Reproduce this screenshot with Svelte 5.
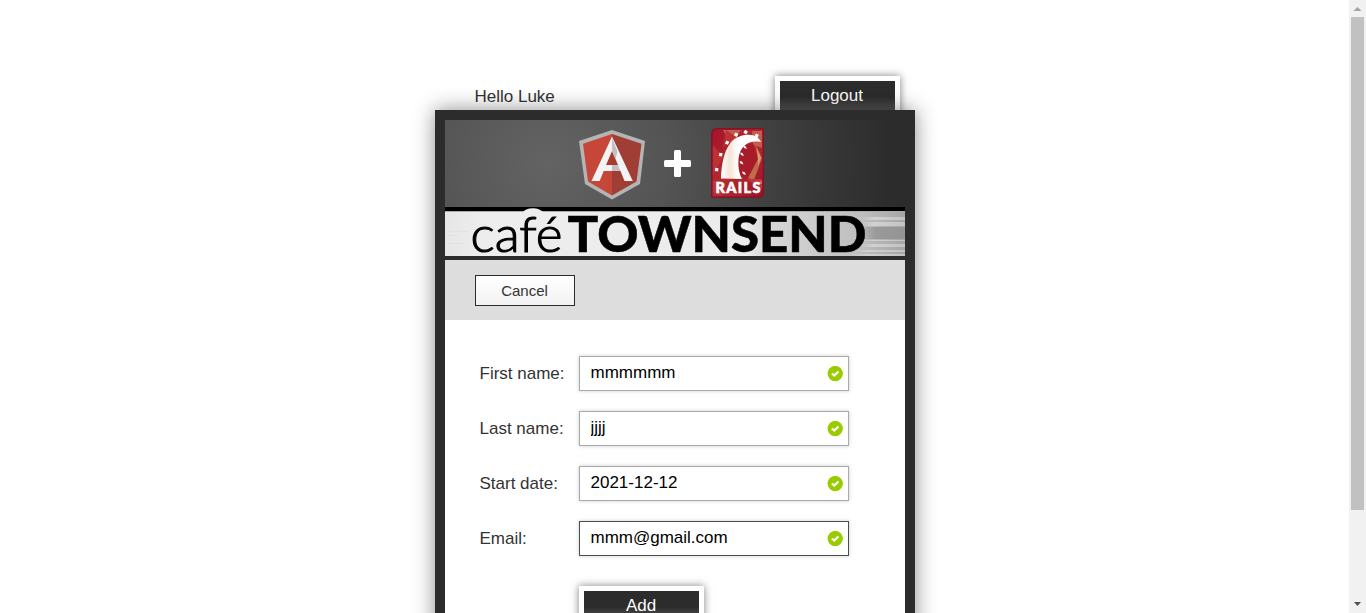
<script>
  let fields = $state([
    { label: 'First name:', value: 'mmmmmm', active: false },
    { label: 'Last name:', value: 'jjjj', active: false },
    { label: 'Start date:', value: '2021-12-12', active: false },
    { label: 'Email:', value: 'mmm@gmail.com', active: true }
  ]);

  // x, y and rotation of the ties along the outside of the rail arch
  const outerTies = [[4, 40, 6], [8, 25, 10], [14.5, 13, 25], [23.5, 5, 30], [33, 2.5, 35], [44, 6, 30]];
  const innerTies = [[31, 43.5], [28.5, 33], [29, 24.5], [32, 17.5]];
</script>

<div class="window">
  <div class="page">
    <div class="column">
      <div class="top">
        <span class="hello">Hello Luke</span>
        <button class="dark">Logout</button>
      </div>
      <main class="card">
        <svg class="banner" width="460" height="140" viewBox="0 0 460 140">
          <defs>
            <radialGradient id="glow" gradientUnits="userSpaceOnUse" cx="102" cy="42" r="345">
              <stop offset="0" stop-color="#636363" />
              <stop offset="0.35" stop-color="#545454" />
              <stop offset="0.7" stop-color="#3d3d3d" />
              <stop offset="1" stop-color="#2c2c2c" />
            </radialGradient>
            <linearGradient id="band">
              <stop offset="0" stop-color="#e6e6e6" />
              <stop offset="0.08" stop-color="#ededed" />
              <stop offset="0.65" stop-color="#ececec" />
              <stop offset="0.7" stop-color="#d8d8d8" />
              <stop offset="0.84" stop-color="#c6c6c6" />
              <stop offset="0.91" stop-color="#bebebe" />
              <stop offset="1" stop-color="#a5a5a5" />
            </linearGradient>
            <linearGradient id="streak">
              <stop offset="0" stop-color="#ccc" stop-opacity="0" />
              <stop offset="0.35" stop-color="#d2d2d2" />
              <stop offset="1" stop-color="#c2c2c2" />
            </linearGradient>
            <linearGradient id="shade">
              <stop offset="0" stop-color="#8d8d8d" stop-opacity="0" />
              <stop offset="0.4" stop-color="#8d8d8d" stop-opacity=".7" />
              <stop offset="1" stop-color="#8d8d8d" stop-opacity=".7" />
            </linearGradient>
            <linearGradient id="ruby" x2="1" y2="1">
              <stop offset="0" stop-color="#a31329" />
              <stop offset="0.5" stop-color="#b52b30" />
              <stop offset="1" stop-color="#9b1127" />
            </linearGradient>
            <linearGradient id="arch" x2="1">
              <stop offset="0" stop-color="#fff" />
              <stop offset="0.22" stop-color="#f4e4d8" />
              <stop offset="0.42" stop-color="#fff" />
            </linearGradient>
          </defs>

          <rect width="460" height="140" fill="#2c2c2c" />
          <rect width="460" height="87" fill="url(#glow)" />

          <path d="M167 10 L200 21 L195 64 L167 79.500 L140 64 L134 21 Z" fill="#b3b5b5" />
          <path d="M167 14 L138 23.700 L143 61.500 L167 75.500 Z" fill="#c64638" />
          <path d="M167 14 L196.500 23.700 L191.500 61.500 L167 75.500 Z" fill="#a03d34" />
          <path d="M167 31 L173 45 H161 Z" fill="#a93a30" />
          <path fill-rule="evenodd" d="M167 16.500 L187.800 61 H179.500 L175.500 51 H158.700 L154.700 61 H146.500 Z M167 31 L161 45 H173 Z" fill="#f3f3f3" />
          <path d="M167 17.500 L172.500 31.500 L170.500 39 L167 31 Z M167 45 H173 L175.500 51 H167 Z" fill="#bfc1c2" />

          <rect x="219" y="40" width="27" height="7" rx="1.500" fill="#fff" />
          <rect x="229" y="30" width="7" height="27" rx="1.500" fill="#fff" />

          <g transform="translate(266 8)">
            <path d="M6 0 H53 V64 Q53 70 47 70 H0 V6 Q0 0 6 0Z" fill="#86112a" />
            <path d="M6 1.500 H51.500 V64 Q51.500 68.500 47 68.500 H1.500 V6 Q1.500 1.500 6 1.500Z" fill="url(#ruby)" />
            <path d="M12 2 H30 L20 17 Z M41 3 H51 V20 L42 17Z" fill="#c45c4c" />
            <path d="M2 17 L12 29 L2 48Z M15 2 L25 9 L12 20Z" fill="#bd3034" />
            <path d="M27 20 L42 15 L47 31 L40 49 L30 48 L26 34Z" fill="#a81c2a" />
            <path d="M44 16 L51 30 L43 52 L37 50 L47 31Z" fill="#c06c4c" />
            <path d="M46 20 L50 30 L47 38 L47 31Z" fill="#d0a06a" />
            <path d="M35 51 H51 V61 Z M2 53 H10 V68 L2 64Z" fill="#ba383c" />
            <path d="M10 50.500 C11 25 18 9 34 7 C42 5.500 48 9 50 14 C37 12 29 18 27.500 31 C27 39 28 45 31 51 Z" fill="url(#arch)" />
            {#each outerTies as [x, y, angle]}
              <rect {x} {y} width="3.300" height="3.300" fill="#fff" transform="rotate({angle} {x + 1.650} {y + 1.650})" />
            {/each}
            {#each innerTies as [x, y]}
              <path d="M{x} {y} l2.500 .5 l1.500 3 l-3 -1z" fill="#fff" />
            {/each}
            <text x="4.500" y="65" class="rails" textLength="45" lengthAdjust="spacing">RAILS</text>
            <circle cx="49.500" cy="54.500" r="1" fill="none" stroke="#efb4b4" stroke-width=".7" />
          </g>

          <rect y="87" width="460" height="4" fill="#000" />
          <rect y="91" width="460" height="45" fill="url(#band)" />
          <rect y="91" width="460" height="1" fill="#aaa" />
          <path d="M77 93 Q80 88.300 88 88.300 Q95 88.300 99 93Z" fill="#ededed" />
          <g fill="url(#streak)">
            <rect x="412" y="97" width="48" height="3" />
            <rect x="412" y="102" width="48" height="4" />
            <rect x="412" y="120" width="48" height="1" />
            <rect x="412" y="124" width="48" height="3" />
            <rect x="402" y="130" width="58" height="2" />
            <rect x="402" y="134" width="58" height="2" />
          </g>
          <rect x="412" y="107" width="48" height="12" fill="url(#shade)" />
          <path d="M1 111.500 H23 M0 115.500 H14 M3 123.500 H18" stroke="#e2e2e2" />
          <text x="25.500" y="131.500" class="cafe" textLength="92" lengthAdjust="spacingAndGlyphs">café</text>
          <text x="122.500" y="131.500" class="town" textLength="299" lengthAdjust="spacingAndGlyphs">TOWNSEND</text>
        </svg>

        <div class="toolbar"><button class="light">Cancel</button></div>

        <form onsubmit={(event) => event.preventDefault()}>
          {#each fields as field}
            <label class="row">
              <span class="name">{field.label}</span>
              <span class="box" class:active={field.active}>
                <input type="text" bind:value={field.value} />
                <svg width="16" height="16" viewBox="0 0 16 16">
                  <circle cx="8.200" cy="7.600" r="7.700" fill="#9c0" />
                  <path d="M4.900 7.500 L7.200 9.600 L11.500 5.500" fill="none" stroke="#fff" stroke-width="2.200" />
                </svg>
              </span>
            </label>
          {/each}
          <button class="dark add">Add</button>
        </form>
      </main>
    </div>
  </div>
  <div class="scroll">
    <svg width="17" height="17"><path d="M4.500 11 L8.500 7 L12.500 11Z" fill="#a3a3a3" /></svg>
    <div class="thumb"></div>
    <svg class="down" width="17" height="17"><path d="M5 6 L8.500 10 L12 6Z" fill="#505050" /></svg>
  </div>
</div>

<style>
  :global(body) { margin: 0; overflow: hidden; background: #fff; }
  .window {
    display: flex;
    height: 613px;
    overflow: hidden;
    font: 17px/20px "Liberation Sans", Arial, sans-serif;
    color: #333;
  }
  .page { flex: 1; display: flex; justify-content: center; min-width: 0; }
  .column { width: 480px; padding-top: 76px; }
  .top {
    display: flex;
    justify-content: space-between;
    align-items: flex-start;
    height: 34px;
    padding: 0 15px 0 40px;
  }
  .hello { margin-top: 11px; }
  button { box-sizing: border-box; margin: 0; font-family: inherit; }
  .dark {
    width: 125px;
    height: 45px;
    padding: 0 0 6px;
    border: 5px solid #fff;
    background: linear-gradient(#2c2c2c 45%, #666) padding-box;
    box-shadow: 0 0 8px rgba(0, 0, 0, .5);
    color: #fff;
    font-size: 17px;
    line-height: 20px;
  }
  .card {
    position: relative;
    box-sizing: border-box;
    width: 480px;
    height: 620px;
    border: 10px solid #2c2c2c;
    background: #fff;
    box-shadow: 0 0 20px rgba(0, 0, 0, .45);
  }
  .banner { display: block; }
  .rails { font: 900 14.500px Lato, sans-serif; fill: #fff; stroke: #fff; stroke-width: .6; }
  .cafe { font: 300 49.500px Lato, sans-serif; fill: #000; stroke: #000; stroke-width: 1.100; }
  .town { font: 900 48.500px Lato, sans-serif; fill: #000; stroke: #000; stroke-width: .5; }
  .toolbar { box-sizing: border-box; height: 60px; padding: 15px 30px; background: #ddd; }
  .light {
    display: block;
    width: 100px;
    height: 31px;
    padding: 0;
    border: 1px solid #2c2c2c;
    background: linear-gradient(#fff, #f2f2f2);
    color: #333;
    font-size: 15px;
    line-height: 20px;
  }
  form { display: flex; flex-direction: column; gap: 20px; padding: 36px 34px 0; }
  .row { display: flex; height: 35px; }
  .name { box-sizing: border-box; width: 100px; padding: 8px 0 0 1px; }
  .box {
    box-sizing: border-box;
    display: flex;
    align-items: center;
    width: 270px;
    padding: 0 5px 0 11px;
    border: 1px solid #aaa;
    box-shadow: 0 0 4px rgba(0, 0, 0, .2);
  }
  .box.active { border-color: #4c4c4c; }
  input {
    flex: 1;
    min-width: 0;
    height: 20px;
    margin: 0 0 2px;
    padding: 0;
    border: 0;
    outline: 0;
    background: none;
    font: inherit;
    color: #000;
  }
  .add { margin: 10px 0 0 100px; }
  .scroll { display: flex; flex-direction: column; align-items: center; width: 17px; background: #f1f1f1; }
  .scroll svg { display: block; flex: none; }
  .thumb { width: 13px; height: 493px; background: #c1c1c1; }
  .down { margin-top: auto; }
</style>
